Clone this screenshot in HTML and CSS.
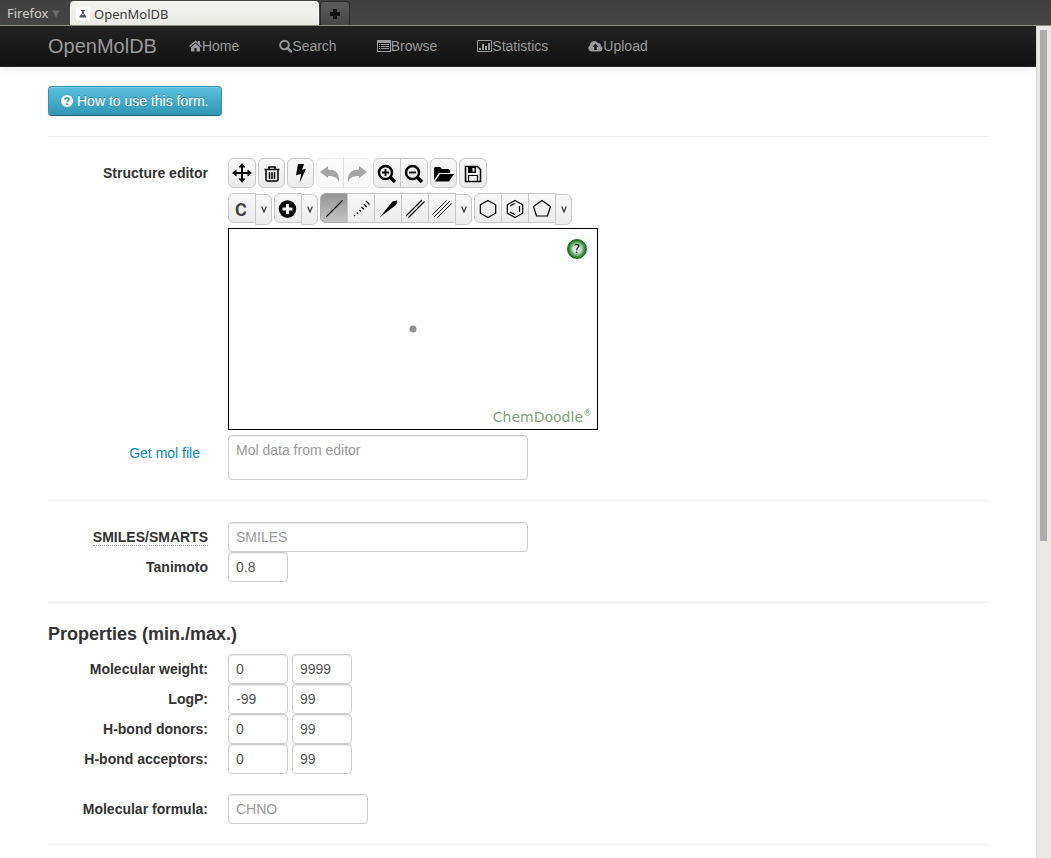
FILE: index.html
```html
<!DOCTYPE html>
<html lang="en">
<head>
<meta charset="utf-8">
<title>OpenMolDB</title>
<link rel="stylesheet" href="styles.css">
</head>
<body>
<header class="chrome">
  <button class="chrome-menu" type="button">Firefox <svg width="8" height="8" viewBox="0 0 8 8"><path d="M0 .5h8L4 7.5z" fill="#696969"/></svg></button>
  <div class="tab">
    <svg class="favicon" width="14" height="14" viewBox="0 0 14 14"><rect width="14" height="14" rx="1" fill="#fff"/><path d="M5 3h4v1H8v2.500l2 2.500v1.500H3.500V9L6 6.500V4H5z" fill="#555"/><path d="M6 7.500h1.500" stroke="#fff"/></svg>
    <span>OpenMolDB</span>
  </div>
  <button class="tab-new" type="button" aria-label="New tab"><svg width="10" height="10" viewBox="0 0 10 10"><path d="M5 0v10M0 5h10" stroke="#111" stroke-width="4"/></svg></button>
</header>
<div class="viewport">
  <div class="page">
    <nav class="navbar">
      <div class="container nav-inner">
        <a class="brand" href="#">OpenMolDB</a>
        <a class="nav-link" href="#"><svg width="13" height="14" viewBox="0 0 13 14"><path d="M6.500 1.500L0 7l1 1 5.500-4.600L12 8l1-1-2-1.700V2H9v1.600zM6.500 4.500L2 8.200V12.500h3.500V9h2v3.500H11V8.200z"/></svg>Home</a>
        <a class="nav-link" href="#"><svg width="13" height="14" viewBox="0 0 13 14"><circle cx="5.500" cy="6" r="4.300" fill="none" stroke="#999" stroke-width="2"/><path d="M8.500 9l3.500 3.500" stroke="#999" stroke-width="2.500" stroke-linecap="round"/></svg>Search</a>
        <a class="nav-link" href="#"><svg width="14" height="14" viewBox="0 0 14 14"><path d="M0 1h14v12H0zM1 4v8h12V4z" fill-rule="evenodd"/><path d="M2 5.500h1M4 5.500h8M2 7.500h1M4 7.500h8M2 9.500h1M4 9.500h8" stroke="#999"/></svg>Browse</a>
        <a class="nav-link" href="#"><svg width="15" height="14" viewBox="0 0 15 14"><path d="M.5 1.500h14v11H.5z" fill="none" stroke="#999"/><path d="M2 9h2v2H2zM5 5h2v6H5zM8 7h2v4H8zM11 4h2v7h-2z"/></svg>Statistics</a>
        <a class="nav-link" href="#"><svg width="15" height="14" viewBox="0 0 15 14"><path d="M3.500 12.500A3.300 3.300 0 0 1 2 6.300 4.200 4.200 0 0 1 9.800 4a2.500 2.500 0 0 1 3 3A2.900 2.900 0 0 1 12 12.500z"/><path d="M7.500 4.500L4.300 8h2v3h2.400V8h2z" fill="#181818"/></svg>Upload</a>
      </div>
    </nav>
    <main class="container content">
      <button class="help-btn" type="button"><svg width="12" height="12" viewBox="0 0 12 12"><circle cx="6" cy="6" r="6" fill="#fff"/><path d="M3.900 4.600C4 2.200 8.200 2.300 8 4.700 7.900 6 6 6 6 7.300M6 8.300v1.600" fill="none" stroke="#3c9fbd" stroke-width="1.700"/></svg> How to use this form.</button>
      <hr>
      <form>
        <section class="row">
          <div class="label">Structure editor</div>
          <div class="editor">
            <div class="toolbar">
              <button class="tool" type="button" aria-label="Move"><svg viewBox="0 0 20 20"><path d="M10 3v14M3 10h14" stroke="#000" stroke-width="2"/><path d="M10 0l3.500 4.500h-7zM10 20l3.500-4.500h-7zM0 10l4.500-3.500v7zM20 10l-4.500-3.500v7z"/></svg></button>
              <button class="tool narrow" type="button" aria-label="Clear"><svg viewBox="0 0 20 20" fill="none" stroke="#000" stroke-width="1.500"><path d="M2.500 6.500h15M7 6V4h6v2M4 7v9.500q0 1.500 1.500 1.500h9q1.500 0 1.500-1.500V7M7.500 9v7M10 9v7M12.500 9v7"/></svg></button>
              <button class="tool narrow" type="button" aria-label="Clean"><svg viewBox="0 0 20 20"><path d="M7 1h6l-2 6 4-1.200L8.500 20l1.700-9L5 12.200z"/></svg></button>
              <div class="group">
                <button class="tool" type="button" aria-label="Undo" disabled><svg viewBox="0 0 20 20"><path d="M0 9l8-6v3.500c8 0 12 4 11 13.500-1-5-4-7-11-7V15z"/></svg></button>
                <button class="tool" type="button" aria-label="Redo" disabled><svg viewBox="0 0 20 20"><path d="M20 9l-8-6v3.500C4 6.500 0 10.500 1 20c1-5 4-7 11-7V15z"/></svg></button>
              </div>
              <div class="group">
                <button class="tool" type="button" aria-label="Zoom in"><svg viewBox="0 0 20 20" fill="none" stroke="#000"><circle cx="8.500" cy="9.500" r="6.500" stroke-width="2.500"/><path d="M13 14l5 5" stroke-width="3.500"/><path d="M8.500 6v7M5 9.500h7" stroke-width="1.800"/></svg></button>
                <button class="tool" type="button" aria-label="Zoom out"><svg viewBox="0 0 20 20" fill="none" stroke="#000"><circle cx="8.500" cy="9.500" r="6.500" stroke-width="2.500"/><path d="M13 14l5 5" stroke-width="3.500"/><path d="M5 9.500h7" stroke-width="1.800"/></svg></button>
              </div>
              <button class="tool narrow" type="button" aria-label="Open"><svg viewBox="0 0 20 20"><path d="M0 17V5l1-1h5l2 2h6l2 1v3H5zM1 18.500L6 11h14l-5 7.500z"/></svg></button>
              <button class="tool" type="button" aria-label="Save"><svg viewBox="0 0 20 20"><path d="M2.500 3.500h12l3 3v12h-15z" fill="none" stroke="#000" stroke-width="1.500"/><path d="M5.500 18v-5.500h9V18" fill="none" stroke="#000" stroke-width="1.200"/><path d="M5 4h8v6H5zM9.500 5v3.500h2V5z" fill-rule="evenodd"/></svg></button>
            </div>
            <div class="toolbar">
              <div class="group">
                <button class="tool element" type="button">C</button>
                <button class="tool more" type="button" aria-label="More elements"><svg class="caret" viewBox="0 0 6 7"><path d="M.7.500L3 6 5.300.500"/></svg></button>
              </div>
              <div class="group">
                <button class="tool" type="button" aria-label="Increase charge"><svg viewBox="0 0 20 20"><circle cx="9.500" cy="11" r="8.700"/><path d="M9.500 6v10M4.500 11h10" stroke="#fff" stroke-width="3"/></svg></button>
                <button class="tool more" type="button" aria-label="More charges"><svg class="caret" viewBox="0 0 6 7"><path d="M.7.500L3 6 5.300.500"/></svg></button>
              </div>
              <div class="group">
                <button class="tool active" type="button" aria-label="Single bond"><svg viewBox="0 0 20 20"><path d="M2 19L18.500 2.500" stroke="#000" stroke-width="1.200"/></svg></button>
                <button class="tool" type="button" aria-label="Recessed bond"><svg viewBox="0 0 20 20" stroke="#000" stroke-width="1.300"><path d="M3 17l1 1M5.800 14.500l1.200 1.200M8.300 12l1.500 1.500M10.500 9l2.200 2.200M12.800 6l3 3M15 3l3.500 3.500"/></svg></button>
                <button class="tool" type="button" aria-label="Protruding bond"><svg viewBox="0 0 20 20"><path d="M1.500 19.500L14.500 3.500 19 2.500 18.500 6.500z"/></svg></button>
                <button class="tool" type="button" aria-label="Double bond"><svg viewBox="0 0 20 20" stroke="#000" stroke-width="1.100"><path d="M1 18L17 2M3.500 19.500L19.500 3.500"/></svg></button>
                <button class="tool" type="button" aria-label="Triple bond"><svg viewBox="0 0 20 20" stroke="#000" stroke-width="1"><path d="M.5 16.500L14.500 2.500M2 19L18 3M5.500 19.500L19.500 5.500"/></svg></button>
                <button class="tool more" type="button" aria-label="More bonds"><svg class="caret" viewBox="0 0 6 7"><path d="M.7.500L3 6 5.300.500"/></svg></button>
              </div>
              <div class="group">
                <button class="tool" type="button" aria-label="Cyclohexane"><svg viewBox="0 0 20 20" fill="none" stroke="#000" stroke-width="1.200"><path d="M10 2.500l7.700 4.300v8.400L10 19.500l-7.700-4.300V6.800z"/></svg></button>
                <button class="tool" type="button" aria-label="Benzene"><svg viewBox="0 0 20 20" fill="none" stroke="#000" stroke-width="1.200"><path d="M10 2.500l7.700 4.300v8.400L10 19.500l-7.700-4.300V6.800zM5 8l5-2.800M14.500 8v6M5 14l5 2.800"/></svg></button>
                <button class="tool" type="button" aria-label="Cyclopentane"><svg viewBox="0 0 20 20" fill="none" stroke="#000" stroke-width="1.200"><path d="M10 2.500l8.500 6-3 9.500h-11L1.500 8.500z"/></svg></button>
                <button class="tool more" type="button" aria-label="More rings"><svg class="caret" viewBox="0 0 6 7"><path d="M.7.500L3 6 5.300.500"/></svg></button>
              </div>
            </div>
            <div class="sketcher">
              <button class="sketch-help" type="button">?</button>
              <svg class="atom" width="8" height="8" viewBox="0 0 8 8"><circle cx="4" cy="4" r="3.500" fill="#909090"/></svg>
              <div class="credit">ChemDoodle<sup>®</sup></div>
            </div>
          </div>
        </section>
        <div class="row mol-row">
          <div class="label mol-link"><a href="#">Get mol file</a></div>
          <textarea class="field wide" aria-label="Mol data" placeholder="Mol data from editor"></textarea>
        </div>
        <hr>
        <div class="row"><label class="label" for="smiles"><abbr>SMILES</abbr>/<abbr>SMARTS</abbr></label><input class="field wide" id="smiles" placeholder="SMILES"></div>
        <div class="row"><label class="label" for="tanimoto">Tanimoto</label><input class="field mini" id="tanimoto" value="0.8"></div>
        <hr>
        <h2>Properties (min./max.)</h2>
        <div class="row"><label class="label" for="mw">Molecular weight:</label><input class="field mini" id="mw" value="0"><input class="field mini" aria-label="Molecular weight maximum" value="9999"></div>
        <div class="row"><label class="label" for="logp">LogP:</label><input class="field mini" id="logp" value="-99"><input class="field mini" aria-label="LogP maximum" value="99"></div>
        <div class="row"><label class="label" for="donors">H-bond donors:</label><input class="field mini" id="donors" value="0"><input class="field mini" aria-label="H-bond donors maximum" value="99"></div>
        <div class="row"><label class="label" for="acceptors">H-bond acceptors:</label><input class="field mini" id="acceptors" value="0"><input class="field mini" aria-label="H-bond acceptors maximum" value="99"></div>
        <div class="row formula"><label class="label" for="formula">Molecular formula:</label><input class="field medium" id="formula" placeholder="CHNO"></div>
        <hr>
      </form>
    </main>
  </div>
  <div class="scrollbar"><div class="thumb"></div></div>
</div>
</body>
</html>
```
FILE: styles.css
```css
* { box-sizing: border-box; }
body {
  margin: 0;
  height: 100vh;
  overflow: hidden;
  display: flex;
  flex-direction: column;
  background: #fff;
  color: #333;
  font: 14px/20px "Liberation Sans", Arial, sans-serif;
}
button, input, textarea { font: inherit; margin: 0; }
svg { flex: none; }

.chrome {
  flex: none;
  display: flex;
  align-items: flex-end;
  height: 26px;
  background: linear-gradient(#404040, #454545);
  border-bottom: 1px solid #8d8d82;
  font: 13px/18px "Noto Sans", "Open Sans", sans-serif;
}
.chrome-menu {
  width: 70px;
  height: 25px;
  padding: 0 0 0 7px;
  border: 0;
  background: none;
  color: #d0d0c8;
  text-align: left;
  white-space: nowrap;
}
.tab {
  display: flex;
  align-items: center;
  gap: 4px;
  width: 249px;
  height: 24px;
  padding-left: 5px;
  border: 1px solid #f8f8f4;
  border-bottom: 0;
  border-radius: 4px 4px 0 0;
  background: linear-gradient(#f4f5f0, #e8e9e3);
  color: #3c3c3c;
}
.tab-new {
  display: flex;
  align-items: center;
  justify-content: center;
  width: 30px;
  height: 24px;
  margin-left: 1px;
  padding: 0;
  border: 1px solid #2a2a2a;
  border-bottom: 0;
  border-radius: 4px 4px 0 0;
  background: linear-gradient(#5c5c5c, #464646);
}

.viewport { flex: 1; min-height: 0; display: flex; }
.page { flex: 1; min-width: 0; overflow: hidden; }
.scrollbar {
  flex: none;
  width: 15px;
  padding: 4px 3px;
  border-left: 1px solid #dcddd8;
  background: #e8e9e4;
}
.thumb { width: 7px; height: 62%; background: #adadad; }

.container { max-width: 940px; margin: 0 auto; }
.navbar {
  background: linear-gradient(#222, #111);
  border-bottom: 1px solid #252525;
  box-shadow: 0 1px 10px rgba(0, 0, 0, .1);
}
.nav-inner { display: flex; align-items: center; gap: 40px; height: 40px; }
.brand {
  margin-right: -8px;
  color: #999;
  font-size: 20px;
  text-decoration: none;
}
.nav-link {
  display: flex;
  align-items: center;
  color: #999;
  fill: #999;
  text-decoration: none;
}
.content { padding-top: 19px; }

.help-btn {
  display: flex;
  align-items: center;
  gap: 4px;
  height: 30px;
  padding: 0 12px;
  border: 1px solid #2f96b4;
  border-bottom-color: #1f6377;
  border-radius: 4px;
  background: linear-gradient(#5bc0de, #2f96b4);
  box-shadow: inset 0 1px 0 rgba(255, 255, 255, .2), 0 1px 2px rgba(0, 0, 0, .05);
  color: #fff;
  text-shadow: 0 -1px 0 rgba(0, 0, 0, .25);
}
hr {
  margin: 20px 0;
  border: 0;
  border-top: 1px solid #eee;
  border-bottom: 1px solid #fff;
}
.row { display: flex; align-items: flex-start; gap: 4px; }
.label {
  flex: none;
  width: 160px;
  margin-right: 16px;
  padding-top: 5px;
  font-weight: bold;
  text-align: right;
}
.editor { flex: none; display: flex; flex-direction: column; gap: 5px; }
.toolbar { display: flex; gap: 2px; height: 30px; }
.group { display: flex; }
.tool {
  display: flex;
  align-items: center;
  justify-content: center;
  width: 28px;
  height: 30px;
  padding: 0;
  border: 1px solid #c8c8c8;
  border-radius: 6px;
  background: linear-gradient(#f8f8f8, #ececec);
  color: #444;
}
.tool svg { width: 20px; height: 20px; }
.tool .caret { width: 6px; height: 7px; fill: none; stroke: #333; stroke-width: 1.2; }
.narrow { width: 27px; }
.group .tool { border-radius: 0; }
.group .tool + .tool { margin-left: -1px; }
.group .tool:first-child { border-radius: 6px 0 0 6px; }
.group .tool:last-child { border-radius: 0 6px 6px 0; }
.group .more { width: 17px; height: 31px; margin-top: 1px; }
.tool:disabled { opacity: .35; }
.group .active { background: linear-gradient(#959595, #c4c4c4); border-color: #aaa; }
.tool.element {
  padding: 4px 2px 0 0;
  font: bold 18px/20px Roboto, "Liberation Sans", sans-serif;
}

.sketcher {
  position: relative;
  display: flex;
  align-items: center;
  justify-content: center;
  width: 370px;
  height: 202px;
  border: 1px solid #000;
}
.sketch-help {
  position: absolute;
  top: 10px;
  right: 10px;
  width: 20px;
  height: 20px;
  padding: 0;
  border: 1px solid #14701c;
  border-radius: 50%;
  background: radial-gradient(circle closest-side, #fff 10%, #b8d4b8 50%, #1c7c26 95%);
  color: #000;
  font: 12px/16px "DejaVu Sans", sans-serif;
}
.credit {
  position: absolute;
  right: 5px;
  bottom: 3px;
  color: #7f9f7f;
  font: 14px/18px "DejaVu Sans", sans-serif;
}
.credit sup { font-size: 9px; line-height: 9px; }

.mol-row { margin-top: 5px; }
.mol-link { padding: 8px 8px 0 0; font-weight: normal; }
.mol-link a { color: #08c; text-decoration: none; }
.field {
  height: 30px;
  padding: 4px 7px;
  border: 1px solid #ccc;
  border-radius: 4px;
  background: #fff;
  box-shadow: inset 0 1px 1px rgba(0, 0, 0, .075);
  color: #555;
}
.field::placeholder { color: #999; }
.wide { width: 300px; }
.medium { width: 140px; }
.mini { width: 60px; }
textarea.field { height: 45px; resize: none; overflow: hidden; }
abbr { border-bottom: 1px dotted #999; }
h2 { margin: 0 0 10px; font-size: 18px; line-height: 20px; }
.formula { margin-top: 20px; }
```
